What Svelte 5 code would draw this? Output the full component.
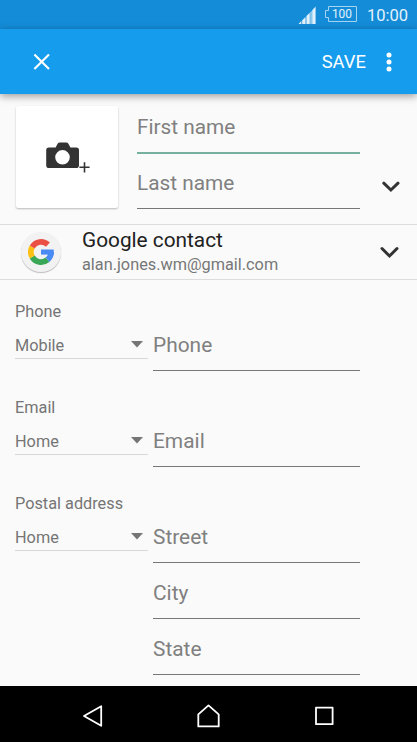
<script>
  const sections = [
    { label: 'Phone', type: 'Mobile', fields: ['Phone'] },
    { label: 'Email', type: 'Home', fields: ['Email'] },
    { label: 'Postal address', type: 'Home', fields: ['Street', 'City', 'State'] }
  ];
</script>

<div class="screen">
  <div class="status">
    <svg class="signal" width="18" height="18" viewBox="0 0 18 18">
      <path d="M0.5 18L3.4 15.1V18ZM4.2 14.3L7.6 10.9V18H4.2ZM8.4 10.1L11.8 6.7V18H8.4ZM12.5 6L13.6 4.9V18H12.5ZM14.2 4.2L17.6 0.6V18H14.2Z" />
    </svg>
    <div class="battery">
      <svg width="33" height="17" viewBox="0 0 33 17">
        <path d="M3.5 1.5H31.5V16.5H3.5V12.5H0.5V5.5H3.5Z" />
      </svg>
      <span>100</span>
    </div>
    <span class="clock">10:00</span>
  </div>

  <header class="toolbar">
    <svg class="close" width="18" height="18" viewBox="0 0 18 18">
      <path d="M1.4 1.4L16 16M16 1.4L1.4 16" />
    </svg>
    <span class="save">SAVE</span>
    <svg class="more" width="6" height="20" viewBox="0 0 6 20">
      <circle cx="3" cy="3" r="2.5" />
      <circle cx="3" cy="10" r="2.5" />
      <circle cx="3" cy="17" r="2.5" />
    </svg>
  </header>

  <main>
    <div class="name">
      <div class="photo">
        <svg width="44" height="32" viewBox="0 0 44 32">
          <path
            fill-rule="evenodd"
            d="M3 5.4H9.6L11.6 1.8Q12.3 .4 13.8 .4H20.2Q21.7 .4 22.4 1.8L24.4 5.4H30.2Q33 5.4 33 8.2V23.2Q33 26 30.2 26H2.8Q.2 26 .2 23.2V8.2Q.2 5.4 3 5.4ZM16.5 8A7.3 7.3 0 1 0 16.5 22.6A7.3 7.3 0 1 0 16.5 8Z"
          />
          <path class="plus" d="M38.5 20.2V30.4M33.4 25.3H43.6" />
        </svg>
      </div>
      <div class="name-fields">
        <div class="field active">First name</div>
        <div class="field">Last name</div>
      </div>
      <svg class="chevron" width="18" height="12" viewBox="0 0 18 12">
        <path d="M1.8 2.2L8.9 9L16 2.2" />
      </svg>
    </div>

    <div class="account">
      <div class="logo">
        <svg width="26" height="26" viewBox="0 0 48 48" fill="none" stroke-width="10.5">
          <path stroke="#4a8af4" d="M42.7 24A18.7 18.7 0 0 1 36 38.3" />
          <path stroke="#3aa757" d="M36 38.3A18.7 18.7 0 0 1 7.8 33.3" />
          <path stroke="#fbc013" d="M7.8 33.3A18.7 18.7 0 0 1 7.8 14.7" />
          <path stroke="#ea5044" d="M7.8 14.7A18.7 18.7 0 0 1 36.8 10.4" />
          <path fill="#4a8af4" d="M24 19.4H47.5V28.8H24Z" />
        </svg>
      </div>
      <div class="account-text">
        <div class="title">Google contact</div>
        <div class="mail">alan.jones.wm@gmail.com</div>
      </div>
      <svg class="chevron" width="19" height="13" viewBox="0 0 19 13">
        <path d="M2 2.5L9.5 10L17 2.5" />
      </svg>
    </div>

    <div class="sections">
      {#each sections as section}
        <section>
          <div class="label">{section.label}</div>
          <div class="row">
            <div class="spinner">
              <span>{section.type}</span>
              <svg width="12" height="7" viewBox="0 0 12 7"><path d="M0 0H12L6 6.6Z" /></svg>
            </div>
            <div class="inputs">
              {#each section.fields as field}
                <div class="field">{field}</div>
              {/each}
            </div>
          </div>
        </section>
      {/each}
    </div>
  </main>

  <nav>
    <svg width="22" height="24" viewBox="0 0 22 24"><path d="M19.2 2.2V21.8L2 12Z" /></svg>
    <svg width="24" height="24" viewBox="0 0 24 24"><path d="M11.5 1.4L21.7 10.4V22.4H1.3V10.4Z" /></svg>
    <svg width="20" height="20" viewBox="0 0 20 20"><path d="M2 1.6H18.6V18.2H2Z" /></svg>
  </nav>
</div>

<style>
  .screen {
    display: flex;
    flex-direction: column;
    width: 417px;
    height: 742px;
    overflow: hidden;
    background: #fafafa;
    color: #808080;
    font-family: Roboto, sans-serif;
  }

  svg {
    display: block;
    flex: none;
  }

  .status {
    display: flex;
    align-items: center;
    justify-content: flex-end;
    box-sizing: border-box;
    height: 29px;
    padding-right: 9px;
    background: #148cd8;
    color: #e3f2fc;
  }

  .signal {
    margin-top: 1px;
    margin-right: 9px;
    fill: #e0f1fc;
  }

  .battery {
    display: grid;
    place-items: center;
    margin-top: -2px;
    margin-right: 9px;
  }

  .battery > * {
    grid-area: 1 / 1;
  }

  .battery path {
    fill: none;
    stroke: #a5d3f2;
    stroke-width: 1;
  }

  .battery span {
    padding-top: 2px;
    padding-left: 1px;
    font-size: 11.9px;
    line-height: 17px;
  }

  .clock {
    font-size: 16.5px;
    line-height: 29px;
    padding-top: 2px;
  }

  .toolbar {
    display: flex;
    align-items: center;
    box-sizing: border-box;
    height: 65px;
    flex: none;
    padding: 0 25px 0 33px;
    background: #169ced;
    color: #fff;
    box-shadow: 0 2px 8px rgba(0, 0, 0, 0.4);
    z-index: 1;
  }

  .close {
    stroke: #fff;
    stroke-width: 2.1;
  }

  .save {
    margin-left: auto;
    margin-right: 20px;
    font-size: 18.4px;
  }

  .more {
    fill: #fff;
  }

  main {
    flex: 1;
    min-height: 0;
  }

  .name {
    display: flex;
    box-sizing: border-box;
    height: 130px;
    padding: 12px 17px 0 16px;
  }

  .photo {
    display: flex;
    box-sizing: border-box;
    width: 102px;
    height: 102px;
    padding: 36px 0 0 30px;
    border-radius: 2px;
    background: #fff;
    box-shadow: 0 1px 2px rgba(0, 0, 0, 0.26);
    fill: #333;
  }

  .plus {
    stroke: #333;
    stroke-width: 1.6;
  }

  .name-fields {
    width: 223px;
    margin: -8px 0 0 19px;
  }

  .field {
    box-sizing: border-box;
    height: 56px;
    padding-top: 17px;
    border-bottom: 1px solid #777;
    font-size: 20.8px;
    line-height: 26px;
  }

  .name .field {
    height: 55px;
    padding-top: 16px;
  }

  .name .active {
    height: 56px;
    border-bottom: 2px solid #76b1a0;
  }

  .chevron {
    fill: none;
    stroke: #333;
    stroke-width: 3;
    stroke-linecap: round;
  }

  .name .chevron {
    margin: 75px 0 0 auto;
  }

  .account {
    display: flex;
    align-items: center;
    box-sizing: border-box;
    height: 56px;
    padding: 0 18px 0 21px;
    border-top: 1px solid #dcdcdc;
    border-bottom: 1px solid #dcdcdc;
  }

  .logo {
    display: grid;
    place-items: center;
    width: 40px;
    height: 40px;
    border-radius: 50%;
    background: #f2f2f2;
    box-shadow: 0 1px 1px rgba(0, 0, 0, 0.25);
  }

  .account-text {
    margin-left: 21px;
  }

  .title {
    color: #212121;
    font-size: 20.8px;
    line-height: 25px;
  }

  .mail {
    color: #777;
    font-size: 16.3px;
    line-height: 24px;
  }

  .account .chevron {
    margin-left: auto;
  }

  .sections {
    padding: 22px 57px 0 15px;
  }

  section {
    display: flex;
    flex-direction: column;
    gap: 2px;
    margin-bottom: 27px;
    color: #757575;
  }

  .label,
  .spinner {
    font-size: 16.3px;
  }

  .label {
    line-height: 20px;
  }

  .row {
    display: flex;
    align-items: flex-start;
    gap: 5px;
    margin-top: -9px;
  }

  .spinner {
    display: flex;
    align-items: center;
    justify-content: space-between;
    box-sizing: border-box;
    width: 133px;
    height: 27px;
    margin-top: 17px;
    padding-right: 5px;
    border-bottom: 1px solid #d8d8d8;
  }

  .spinner svg {
    margin-top: -1px;
    fill: #757575;
  }

  .inputs {
    width: 207px;
  }

  .inputs .field {
    color: #808080;
    font-size: 20.9px;
  }

  nav {
    display: flex;
    align-items: center;
    justify-content: space-between;
    box-sizing: border-box;
    height: 56px;
    flex: none;
    padding: 4px 83px 0 82px;
    background: #000;
    z-index: 1;
  }

  nav path {
    fill: none;
    stroke: #fff;
    stroke-width: 1.8;
    stroke-linejoin: round;
  }
</style>
